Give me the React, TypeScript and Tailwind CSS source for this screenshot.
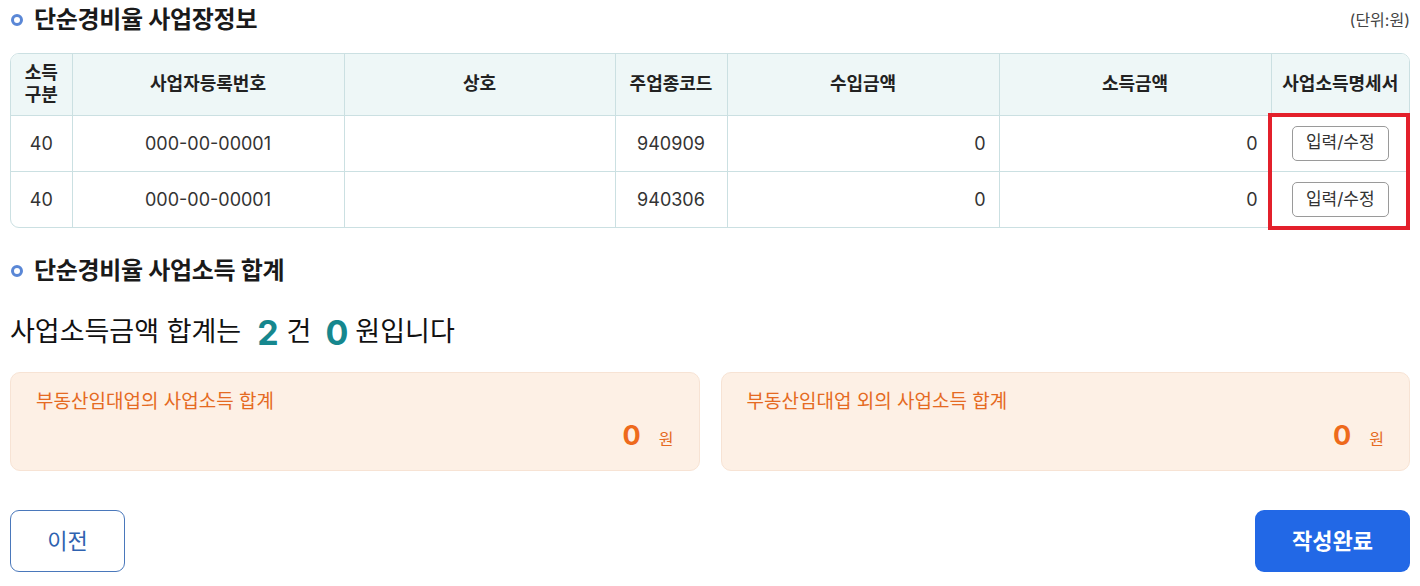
import React from 'react';

const rows = [
  { type: '40', regNo: '000-00-00001', name: '', code: '940909', revenue: '0', income: '0' },
  { type: '40', regNo: '000-00-00001', name: '', code: '940306', revenue: '0', income: '0' },
];

const font = { fontFamily: 'Inter, "Noto Sans CJK KR", "Noto Sans", sans-serif' };

function SectionTitle({ children }: { children: React.ReactNode }) {
  return (
    <div className="flex items-center gap-[11px]">
      <span className="ml-[1px] w-[12px] h-[12px] rounded-full border-[3px] border-[#5a87d6]" />
      <h2 className="text-[24px] font-bold text-[#1a1a1a] tracking-[-0.3px]">{children}</h2>
    </div>
  );
}

function SumCard({ label }: { label: string }) {
  return (
    <div className="flex-1 h-[99px] rounded-[10px] bg-[#fdf0e5] border border-[#f7e3d4] px-[25px] pt-[17px] flex flex-col">
      <div className="text-[19px] leading-[24px] text-[#e56a22]">{label}</div>
      <div className="flex items-baseline justify-end gap-[18px] mt-[5px]">
        <span className="text-[27px] leading-[34px] font-bold text-[#ee6a1c]">0</span>
        <span className="text-[16px] text-[#e56a22]">원</span>
      </div>
    </div>
  );
}

export default function App() {
  const th = 'border-l border-[#cbe0e2] first:border-l-0 font-bold text-[18px] text-[#222] leading-[22px]';
  const td = 'border-l border-t border-[#cbe0e2] first:border-l-0 text-[18px] text-[#333]';

  return (
    <div className="w-[1420px] h-[586px] bg-white px-[10px] overflow-hidden" style={font}>
      <div className="h-[40px] flex items-center justify-between">
        <SectionTitle>단순경비율 사업장정보</SectionTitle>
        <span className="text-[16px] text-[#444]">(단위:원)</span>
      </div>

      <div className="relative mt-[13px]">
        <div className="rounded-[9px] border border-[#cbe0e2] overflow-hidden">
          <table className="w-full border-collapse table-fixed">
            <colgroup>
              <col className="w-[61px]" />
              <col className="w-[272px]" />
              <col className="w-[271px]" />
              <col className="w-[112px]" />
              <col className="w-[272px]" />
              <col className="w-[272px]" />
              <col />
            </colgroup>
            <thead>
              <tr className="h-[61px] bg-[#eef7f7]">
                <th className={th}>소득<br />구분</th>
                <th className={th}>사업자등록번호</th>
                <th className={th}>상호</th>
                <th className={th}>주업종코드</th>
                <th className={th}>수입금액</th>
                <th className={th}>소득금액</th>
                <th className={th}>사업소득명세서</th>
              </tr>
            </thead>
            <tbody>
              {rows.map((r, i) => (
                <tr key={i} className="h-[56px]">
                  <td className={`${td} text-center`}>{r.type}</td>
                  <td className={`${td} text-center`}>{r.regNo}</td>
                  <td className={`${td} text-center`}>{r.name}</td>
                  <td className={`${td} text-center`}>{r.code}</td>
                  <td className={`${td} text-right pr-[13px]`}>{r.revenue}</td>
                  <td className={`${td} text-right pr-[13px]`}>{r.income}</td>
                  <td className={`${td} text-center`}>
                    <button className="w-[97px] h-[35px] rounded-[5px] border border-[#9a9a9a] bg-white text-[17px] text-[#333]">
                      입력/수정
                    </button>
                  </td>
                </tr>
              ))}
            </tbody>
          </table>
        </div>
        <div className="absolute right-0 top-[60px] w-[142px] h-[117px] border-[4px] border-[#e3202b] pointer-events-none" />
      </div>

      <div className="h-[40px] mt-[23px] flex items-center">
        <SectionTitle>단순경비율 사업소득 합계</SectionTitle>
      </div>

      <div className="h-[40px] mt-[21px] flex items-center text-[27px] text-[#111]">
        <span>사업소득금액 합계는</span>
        <span className="ml-[16px] text-[34px] font-bold text-[#16878e]">2</span>
        <span className="ml-[8px]">건</span>
        <span className="ml-[14px] text-[34px] font-bold text-[#16878e]">0</span>
        <span className="ml-[7px]">원입니다</span>
      </div>

      <div className="mt-[20px] flex gap-[21px]">
        <SumCard label="부동산임대업의 사업소득 합계" />
        <SumCard label="부동산임대업 외의 사업소득 합계" />
      </div>

      <div className="mt-[39px] flex justify-between">
        <button className="w-[115px] h-[62px] rounded-[9px] border border-[#4a78bb] bg-white text-[22px] text-[#2f62b0]">
          이전
        </button>
        <button className="w-[155px] h-[62px] rounded-[9px] bg-[#2268e6] text-[22px] font-bold text-white">
          작성완료
        </button>
      </div>
    </div>
  );
}
